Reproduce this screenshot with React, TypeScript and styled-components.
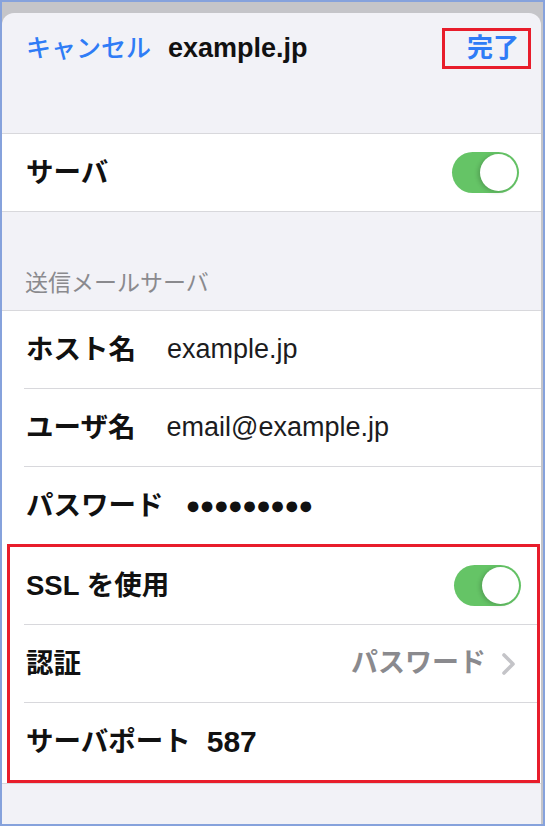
import React from 'react';
import styled, { createGlobalStyle } from 'styled-components';

const GlobalStyle = createGlobalStyle`
  html, body {
    margin: 0;
    padding: 0;
    background: #ffffff;
  }
  body {
    font-family: "Liberation Sans", "Noto Sans CJK JP", sans-serif;
    -webkit-font-smoothing: antialiased;
  }
`;

const Frame = styled.div`
  width: 545px;
  height: 826px;
  box-sizing: border-box;
  border: 2px solid #86a2dc;
  background: #c5c5c9;
  padding: 11px 2px 0 0;
  display: flex;
  flex-direction: column;
`;

const Sheet = styled.div`
  flex: 1;
  display: flex;
  flex-direction: column;
  background: #f2f2f7;
  border-radius: 12px 12px 0 0;
  overflow: hidden;
`;

const Header = styled.header`
  height: 120px;
  border-bottom: 1px solid #d8d8dc;
`;

const NavBar = styled.div`
  height: 70px;
  display: flex;
  align-items: center;
  padding: 0 10px 0 24px;
`;

const NavButton = styled.span<{ $bold?: boolean }>`
  color: #2f7cf6;
  font-size: ${(p) => (p.$bold ? 26 : 25)}px;
  font-weight: ${(p) => (p.$bold ? 700 : 500)};
  line-height: 1;
`;

const Title = styled.span`
  margin-left: 17px;
  font-size: 27px;
  font-weight: 700;
  color: #111111;
  line-height: 1;
`;

const Highlight = styled.div`
  border: 3px solid #e81d2b;
  box-sizing: border-box;
`;

const DoneMark = styled(Highlight)`
  margin-left: auto;
  height: 41px;
  display: flex;
  align-items: center;
  padding: 0 9px 0 22px;
`;

const RowsMark = styled(Highlight)`
  margin: 0 1px 0 5px;
`;

const Group = styled.section`
  background: #ffffff;
  border-bottom: 1px solid #d8d8dc;
  &.with-top {
    border-top: 1px solid #d8d8dc;
  }
`;

const SectionHeader = styled.div`
  height: 98px;
  box-sizing: border-box;
  display: flex;
  align-items: flex-end;
  padding: 0 24px 12px 23px;
  font-size: 23px;
  line-height: 30px;
  color: #8a8a8e;
`;

const Row = styled.div<{ $boxed?: boolean }>`
  padding-left: ${(p) => (p.$boxed ? 14 : 22)}px;
`;

const RowBody = styled.div<{ $boxed?: boolean; $last?: boolean }>`
  height: 77px;
  display: flex;
  align-items: center;
  padding: 0 ${(p) => (p.$boxed ? 16 : 22)}px 0 2px;
  border-bottom: ${(p) => (p.$last ? 'none' : '1px solid #d8d8dc')};
`;

const Label = styled.span`
  font-size: 27.5px;
  font-weight: 700;
  color: #111111;
  line-height: 1;
  white-space: nowrap;
`;

const Value = styled.span<{ $gap?: number; $muted?: boolean }>`
  margin-left: ${(p) => p.$gap ?? 0}px;
  font-size: 27px;
  line-height: 1;
  white-space: nowrap;
  color: ${(p) => (p.$muted ? '#8a8a8e' : '#1c1c1e')};
  font-weight: ${(p) => (p.$muted ? 700 : 400)};
`;

const Port = styled.span`
  margin-left: 16px;
  font-size: 30px;
  font-weight: 700;
  color: #111111;
  line-height: 1;
`;

const Secret = styled.span`
  margin-left: 22px;
  font-size: 25px;
  letter-spacing: -1px;
  color: #111111;
  line-height: 1;
`;

const Detail = styled.span`
  margin-left: auto;
  display: flex;
  align-items: center;
  gap: 14px;
  padding-right: 4px;
`;

const Toggle = styled.span`
  position: relative;
  margin-left: auto;
  width: 67px;
  height: 41px;
  border-radius: 21px;
  background: #65c466;
`;

const Knob = styled.span`
  position: absolute;
  top: 2px;
  right: 2px;
  width: 37px;
  height: 37px;
  border-radius: 50%;
  background: #ffffff;
  box-shadow: -2px 1px 4px rgba(0, 0, 0, 0.18);
`;

const Switch = () => (
  <Toggle>
    <Knob />
  </Toggle>
);

const Chevron = () => (
  <svg width="17" height="24" viewBox="0 0 17 24">
    <polyline
      points="4,3 13,12 4,21"
      fill="none"
      stroke="#c4c4c8"
      strokeWidth="3.6"
      strokeLinecap="round"
      strokeLinejoin="round"
    />
  </svg>
);

const App = () => (
  <>
    <GlobalStyle />
    <Frame>
      <Sheet>
        <Header>
          <NavBar>
            <NavButton>キャンセル</NavButton>
            <Title>example.jp</Title>
            <DoneMark>
              <NavButton $bold>完了</NavButton>
            </DoneMark>
          </NavBar>
        </Header>

        <Group>
          <Row>
            <RowBody $last>
              <Label>サーバ</Label>
              <Switch />
            </RowBody>
          </Row>
        </Group>

        <SectionHeader>送信メールサーバ</SectionHeader>

        <Group className="with-top">
          <Row>
            <RowBody>
              <Label>ホスト名</Label>
              <Value $gap={31}>example.jp</Value>
            </RowBody>
          </Row>
          <Row>
            <RowBody>
              <Label>ユーザ名</Label>
              <Value $gap={31}>email@example.jp</Value>
            </RowBody>
          </Row>
          <Row>
            <RowBody $last>
              <Label>パスワード</Label>
              <Secret>●●●●●●●●●</Secret>
            </RowBody>
          </Row>
          <RowsMark>
            <Row $boxed>
              <RowBody $boxed>
                <Label>SSL を使用</Label>
                <Switch />
              </RowBody>
            </Row>
            <Row $boxed>
              <RowBody $boxed>
                <Label>認証</Label>
                <Detail>
                  <Value $muted>パスワード</Value>
                  <Chevron />
                </Detail>
              </RowBody>
            </Row>
            <Row $boxed>
              <RowBody $boxed $last>
                <Label>サーバポート</Label>
                <Port>587</Port>
              </RowBody>
            </Row>
          </RowsMark>
        </Group>
      </Sheet>
    </Frame>
  </>
);

export default App;
